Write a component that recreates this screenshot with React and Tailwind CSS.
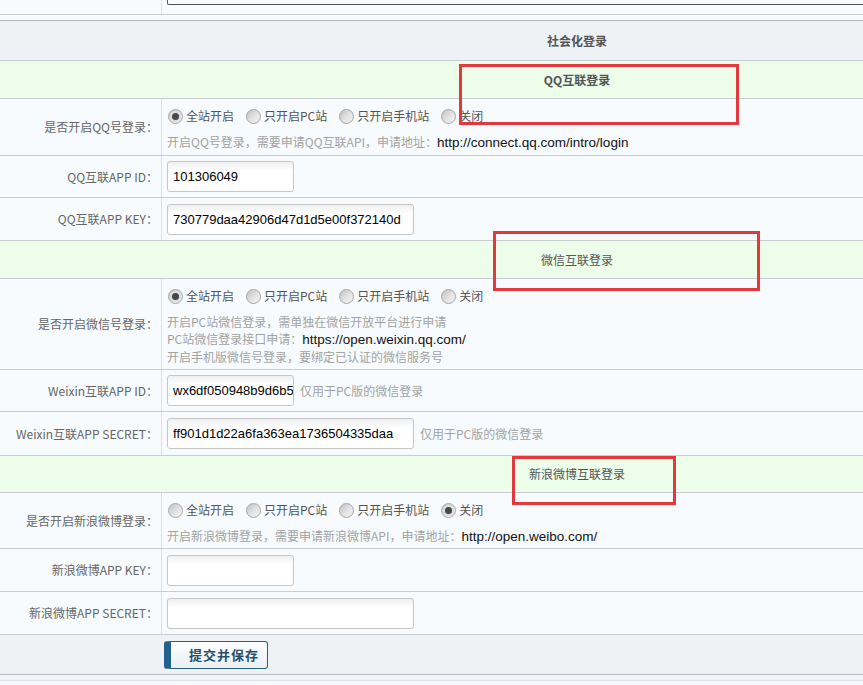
import { useState } from "react";

const cjk = "font-['Noto_Sans_CJK_SC',sans-serif]";

function Radio({ label, checked, onPick }) {
  return (
    <span className="flex cursor-pointer items-center mr-[11px]" onClick={onPick}>
      <span className="ml-px flex h-[15px] w-[15px] items-center justify-center rounded-full border border-[#a6a6a6] bg-[linear-gradient(135deg,#c2c2c2,#e6e6e6_60%,#f4f4f4)]">
        {checked ? <span className="h-[7px] w-[7px] rounded-full bg-[#474747] ring-2 ring-[#dcdcdc]" /> : null}
      </span>
      <span className="ml-[3px]">{label}</span>
    </span>
  );
}

function RadioGroup({ initial }) {
  const [value, setValue] = useState(initial);
  const options = ["全站开启", "只开启PC站", "只开启手机站", "关闭"];
  return (
    <div className="flex h-[20px] items-center text-[12px] text-[#555]">
      {options.map((opt) => (
        <Radio key={opt} label={opt} checked={value === opt} onPick={() => setValue(opt)} />
      ))}
    </div>
  );
}

function Row({ h, label, children, center = true }) {
  return (
    <div className={`flex border-b border-[#c9cdd1] bg-[#f7fbfe] ${h}`}>
      <div className="flex w-[162px] shrink-0 items-center justify-end border-r border-[#dbe0e4] pr-[3px] text-[12px] text-[#666]">
        {label}
      </div>
      <div className={center ? "flex flex-1 items-center pl-[5px]" : "flex-1 pl-[5px]"}>{children}</div>
    </div>
  );
}

function Field({ value = "", wide }) {
  return (
    <input
      readOnly
      defaultValue={value}
      className={`h-[31px] rounded-[3px] border border-[#c6c6c6] bg-white bg-linear-to-b from-[#efefef] to-white to-[30%] pl-[5px] font-['Liberation_Sans',sans-serif] text-[13px] text-black outline-none ${
        wide ? "w-[247px]" : "w-[127px]"
      }`}
    />
  );
}

function Section({ h, title, bold }) {
  return (
    <div
      className={`flex items-center justify-center border-b border-[#c9cdd1] bg-[#ecfdea] text-[12px] text-[#555] ${h} ${
        bold ? "font-bold" : ""
      }`}
    >
      {title}
    </div>
  );
}

const hint = "text-[12px] leading-[17px] text-[#a3a3a3]";
const link = "font-['Liberation_Sans',sans-serif] text-[13.5px] text-[#111]";

export default function App() {
  return (
    <div className={`relative h-[685px] w-full overflow-hidden bg-[#f7fbfe] ${cjk}`}>
      <div className="w-[1154px]">
        <div className="flex h-[15px] border-b border-[#c9cdd1]">
          <div className="w-[162px] shrink-0 border-r border-[#dbe0e4]" />
          <div className="flex-1 pl-[5px]">
            <div className="h-[5px] rounded-bl-[2px] border-b border-l border-[#555]" />
          </div>
        </div>
        <div className="h-[6px] border-b border-[#b3b7bb]" />

        <div className="flex h-[40px] items-center justify-center border-b border-[#c9cdd1] bg-[#eff2f5] text-[12px] font-bold text-[#555]">
          社会化登录
        </div>

        <Section h="h-[38px]" title="QQ互联登录" bold />
        <Row h="h-[57px]" label="是否开启QQ号登录：" center={false}>
          <div className="pt-[7px]">
            <RadioGroup initial="全站开启" />
            <div className={`mt-[7px] ${hint}`}>
              开启QQ号登录，需要申请QQ互联API，申请地址：<span className={link}>http://connect.qq.com/intro/login</span>
            </div>
          </div>
        </Row>
        <Row h="h-[42px]" label="QQ互联APP ID：">
          <Field value="101306049" />
        </Row>
        <Row h="h-[43px]" label="QQ互联APP KEY：">
          <Field value="730779daa42906d47d1d5e00f372140d" wide />
        </Row>

        <Section h="h-[38px]" title="微信互联登录" />
        <Row h="h-[91px]" label="是否开启微信号登录：" center={false}>
          <div className="pt-[7px]">
            <RadioGroup initial="全站开启" />
            <div className={`mt-[7px] ${hint}`}>
              <div>开启PC站微信登录，需单独在微信开放平台进行申请</div>
              <div>
                PC站微信登录接口申请：<span className={link}>https://open.weixin.qq.com/</span>
              </div>
              <div>开启手机版微信号登录，要绑定已认证的微信服务号</div>
            </div>
          </div>
        </Row>
        <Row h="h-[42px]" label="Weixin互联APP ID：">
          <Field value="wx6df050948b9d6b55c1" />
          <span className={`ml-[6px] ${hint}`}>仅用于PC版的微信登录</span>
        </Row>
        <Row h="h-[44px]" label="Weixin互联APP SECRET：">
          <Field value="ff901d1d22a6fa363ea1736504335daa" wide />
          <span className={`ml-[6px] ${hint}`}>仅用于PC版的微信登录</span>
        </Row>

        <Section h="h-[37px]" title="新浪微博互联登录" />
        <Row h="h-[56px]" label="是否开启新浪微博登录：" center={false}>
          <div className="pt-[7px]">
            <RadioGroup initial="关闭" />
            <div className={`mt-[7px] ${hint}`}>
              开启新浪微博登录，需要申请新浪微博API，申请地址：<span className={link}>http://open.weibo.com/</span>
            </div>
          </div>
        </Row>
        <Row h="h-[43px]" label="新浪微博APP KEY：">
          <Field />
        </Row>
        <Row h="h-[43px]" label="新浪微博APP SECRET：">
          <Field wide />
        </Row>

        <div className="flex h-[40px] items-center border-b border-[#b9bdc1] bg-[#eff2f5] pl-[164px]">
          <button
            type="button"
            className="h-[28px] w-[104px] rounded-[3px] border border-[#2b5f84] border-l-[7px] border-l-[#22618d] bg-linear-to-b from-white to-[#e9eff4] pl-[10px] text-[13px] font-bold tracking-[1px] text-[#27506f]"
          >
            提交并保存
          </button>
        </div>
        <div className="h-[6px] border-b border-[#dde2e6] bg-[#f3f6f8]" />
      </div>

      <div className="absolute left-[459px] top-[64px] h-[61px] w-[280px] border-[3px] border-[#e4393c]" />
      <div className="absolute left-[493px] top-[231px] h-[60px] w-[267px] border-[3px] border-[#e4393c]" />
      <div className="absolute left-[512px] top-[456px] h-[49px] w-[164px] border-[3px] border-[#e4393c]" />
    </div>
  );
}
